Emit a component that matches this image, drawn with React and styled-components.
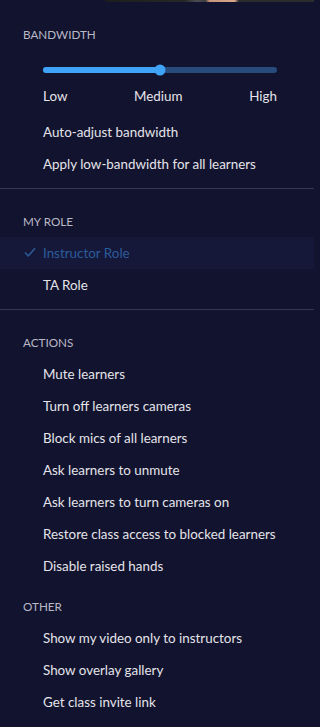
import React from "react";
import styled, { createGlobalStyle } from "styled-components";

const GlobalStyle = createGlobalStyle`
  html, body {
    margin: 0;
    padding: 0;
    background: #12132e;
  }
  body {
    font-family: Lato, "Open Sans", sans-serif;
    -webkit-font-smoothing: antialiased;
  }
`;

const Menu = styled.div`
  width: 314px;
  height: 727px;
  background: #12132e;
  color: #e4e4ea;
  overflow: hidden;
  display: flex;
  flex-direction: column;
`;

const TopStrip = styled.div`
  height: 2px;
  margin-left: 105px;
  background: linear-gradient(
    90deg,
    #1c1e1e 0%,
    #262828 38%,
    #4a4c50 44%,
    #3a3c40 48%,
    #c9967e 50%,
    #d9a589 62%,
    #2a2c2e 64%,
    #2a2c2e 100%
  );
`;

const Section = styled.div`
  display: flex;
  flex-direction: column;
  padding: 16px 0 8px;
  border-bottom: ${(p) => (p.$divider ? "1px solid #363752" : "none")};
`;

const Header = styled.div`
  height: 32px;
  display: flex;
  align-items: center;
  padding-left: 23px;
  font-size: 11.7px;
  color: #b9b9c6;
`;

const Item = styled.div`
  height: 32px;
  display: flex;
  align-items: center;
  padding-left: 43px;
  position: relative;
  font-size: 13.4px;
  color: ${(p) => (p.$active ? "#2b5c9a" : "#e4e4ea")};
  background: ${(p) => (p.$active ? "#16183a" : "transparent")};
`;

const Check = styled.svg`
  position: absolute;
  left: 24px;
  top: 10px;
`;

const SliderBlock = styled.div`
  height: 66px;
  padding: 0 37px 0 43px;
  display: flex;
  flex-direction: column;
`;

const Track = styled.div`
  margin-top: 17px;
  height: 6px;
  border-radius: 3px;
  background: #264b7c;
  position: relative;
`;

const Fill = styled.div`
  height: 100%;
  border-radius: 3px;
  background: #3fa3f8;
`;

const Thumb = styled.div`
  position: absolute;
  top: 50%;
  width: 11px;
  height: 11px;
  border-radius: 50%;
  background: #3fa3f8;
  transform: translate(-50%, -50%);
`;

const Labels = styled.div`
  margin-top: 15px;
  display: flex;
  justify-content: space-between;
  font-size: 13.4px;
  color: #e4e4ea;
`;

const Spacer = styled.div`
  height: 8px;
`;

export default function App() {
  const level = 50;

  return (
    <Menu>
      <GlobalStyle />
      <TopStrip />
      <Section $divider>
        <Header>BANDWIDTH</Header>
        <SliderBlock>
          <Track>
            <Fill style={{ width: `${level}%` }} />
            <Thumb style={{ left: `${level}%` }} />
          </Track>
          <Labels>
            <span>Low</span>
            <span>Medium</span>
            <span>High</span>
          </Labels>
        </SliderBlock>
        <Item>Auto-adjust bandwidth</Item>
        <Item>Apply low-bandwidth for all learners</Item>
      </Section>

      <Section $divider>
        <Header>MY ROLE</Header>
        <Item $active>
          <Check width="12" height="11" viewBox="0 0 12 11">
            <path d="M1 5.5 L4.3 9 L11 1.2" fill="none" stroke="#2b5c9a" strokeWidth="1.5" />
          </Check>
          Instructor Role
        </Item>
        <Item>TA Role</Item>
      </Section>

      <Section>
        <Header>ACTIONS</Header>
        <Item>Mute learners</Item>
        <Item>Turn off learners cameras</Item>
        <Item>Block mics of all learners</Item>
        <Item>Ask learners to unmute</Item>
        <Item>Ask learners to turn cameras on</Item>
        <Item>Restore class access to blocked learners</Item>
        <Item>Disable raised hands</Item>
        <Spacer />
        <Header>OTHER</Header>
        <Item>Show my video only to instructors</Item>
        <Item>Show overlay gallery</Item>
        <Item>Get class invite link</Item>
      </Section>
    </Menu>
  );
}
